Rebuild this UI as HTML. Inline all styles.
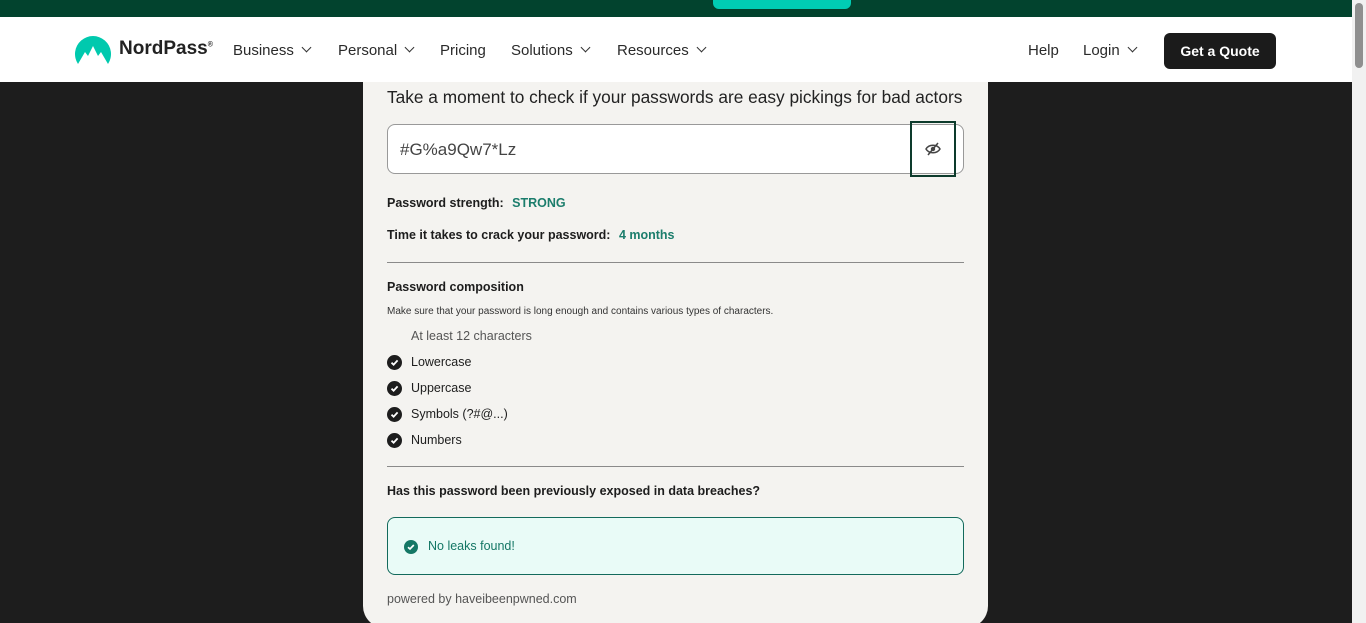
<!DOCTYPE html>
<html><head><meta charset="utf-8"><style>
*{margin:0;padding:0;box-sizing:border-box}
html,body{width:1366px;height:623px;overflow:hidden}
body{background:#1d1d1d;font-family:"Liberation Sans",sans-serif;position:relative;color:#1d1d1d}
.top{position:absolute;left:0;top:0;width:1352px;height:17px;background:#02432e}
.tbtn{position:absolute;left:713px;top:-8px;width:138px;height:17px;background:#00cdb4;border-radius:6px}
.nav{position:absolute;left:0;top:17px;width:1352px;height:65px;background:#fff}
.nav span{position:absolute;top:24px;font-size:15px;color:#2a2a2a}
.chev{display:inline-block;width:7px;height:7px;border-right:1.6px solid #333;border-bottom:1.6px solid #333;transform:rotate(45deg);margin-left:9px;position:relative;top:-4px}
.quote{position:absolute;left:1164px;top:16px;width:112px;height:36px;background:#1b1b1b;border-radius:6px;color:#fff;font-weight:bold;font-size:14px;text-align:center;line-height:36px}
.sb{position:absolute;left:1352px;top:0;width:14px;height:623px;background:#f1f1f1}
.sb div{position:absolute;left:3px;top:3px;width:8px;height:65px;background:#8f8f8f;border-radius:4px}
.card{position:absolute;left:363px;top:82px;width:625px;height:546px;background:#f4f3f0;border-radius:0 0 22px 22px}
.t{position:absolute;left:24px;white-space:nowrap}
.s{font-size:12.5px}
.inp{position:absolute;left:24px;top:42px;width:577px;height:50px;background:#fff;border:1px solid #999;border-radius:8px}
.eye{position:absolute;left:547px;top:39px;width:46px;height:56px;border:2px solid #0d3b2c}
.hr{position:absolute;left:24px;width:577px;height:1px;background:#8a8a8a}
.ck{position:absolute;left:24px;width:15px;height:15px;border-radius:50%;background:#1d1d1d}
.ck svg{position:absolute;left:0;top:0}
.leak{position:absolute;left:24px;top:435px;width:577px;height:58px;background:#e9fbf7;border:1px solid #136a5c;border-radius:8px}
</style></head><body>
<div class="top"><div class="tbtn"></div></div>
<div class="nav">
<svg style="position:absolute;left:74px;top:17px" width="38" height="31" viewBox="0 0 38 31"><path d="M4 30 A18 18 0 1 1 34 30 L27 18 L24 22 L19 12 L14 22 L11 18 Z" fill="#00c9ae"/></svg>
<span style="left:119px;top:21px;font-size:19px;font-weight:bold;color:#222">NordPass<sup style="font-size:7px">®</sup></span>
<span style="left:233px;top:25px">Business<i class="chev"></i></span>
<span style="left:338px;top:25px">Personal<i class="chev"></i></span>
<span style="left:440px;top:25px">Pricing</span>
<span style="left:511px;top:25px">Solutions<i class="chev"></i></span>
<span style="left:617px;top:25px">Resources<i class="chev"></i></span>
<span style="left:1028px;top:25px">Help</span>
<span style="left:1083px;top:25px">Login<i class="chev"></i></span>
<div class="quote">Get a Quote</div>
</div>
<div class="sb"><div></div></div>
<div class="card">
<div class="t" style="top:5px;font-size:17.3px;color:#222">Take a moment to check if your passwords are easy pickings for bad actors</div>
<div class="inp"><div style="position:absolute;left:12px;top:15px;font-size:17px;color:#444">#G%a9Qw7*Lz</div></div>
<div class="eye"><svg style="position:absolute;left:13px;top:19px" width="16" height="14" viewBox="0 0 16 14"><path d="M1 7 C4 2 12 2 15 7 C12 12 4 12 1 7Z" fill="none" stroke="#444" stroke-width="1.5"/><circle cx="8" cy="7" r="2.2" fill="#444"/><path d="M3 13 L13 1" stroke="#444" stroke-width="1.5"/></svg></div>
<div class="t s" style="top:114px;font-weight:bold">Password strength: <span style="color:#1b7d6c;margin-left:5px">STRONG</span></div>
<div class="t s" style="top:146px;font-weight:bold">Time it takes to crack your password: <span style="color:#1b7d6c;margin-left:5px">4 months</span></div>
<div class="hr" style="top:180px"></div>
<div class="t s" style="top:198px;font-weight:bold">Password composition</div>
<div class="t" style="top:224px;font-size:10px;color:#333">Make sure that your password is long enough and contains various types of characters.</div>
<div class="t s" style="left:48px;top:247px;color:#555">At least 12 characters</div>
<div class="ck" style="top:273px"><svg width="15" height="15"><path d="M4.5 7.7 L6.6 9.7 L10.6 5.4" fill="none" stroke="#fff" stroke-width="1.8"/></svg></div>
<div class="t s" style="left:48px;top:273px">Lowercase</div>
<div class="ck" style="top:299px"><svg width="15" height="15"><path d="M4.5 7.7 L6.6 9.7 L10.6 5.4" fill="none" stroke="#fff" stroke-width="1.8"/></svg></div>
<div class="t s" style="left:48px;top:299px">Uppercase</div>
<div class="ck" style="top:325px"><svg width="15" height="15"><path d="M4.5 7.7 L6.6 9.7 L10.6 5.4" fill="none" stroke="#fff" stroke-width="1.8"/></svg></div>
<div class="t s" style="left:48px;top:325px">Symbols (?#@...)</div>
<div class="ck" style="top:351px"><svg width="15" height="15"><path d="M4.5 7.7 L6.6 9.7 L10.6 5.4" fill="none" stroke="#fff" stroke-width="1.8"/></svg></div>
<div class="t s" style="left:48px;top:351px">Numbers</div>
<div class="hr" style="top:384px"></div>
<div class="t s" style="top:402px;font-weight:bold">Has this password been previously exposed in data breaches?</div>
<div class="leak">
<div style="position:absolute;left:16px;top:22px;width:14px;height:14px;border-radius:50%;background:#147765"><svg width="14" height="14"><path d="M4 7.2 L6 9 L9.8 5" fill="none" stroke="#fff" stroke-width="1.7"/></svg></div>
<div style="position:absolute;left:40px;top:21px;font-size:12.5px;color:#147765">No leaks found!</div>
</div>
<div class="t s" style="top:510px;color:#555">powered by haveibeenpwned.com</div>
</div>
</body></html>
